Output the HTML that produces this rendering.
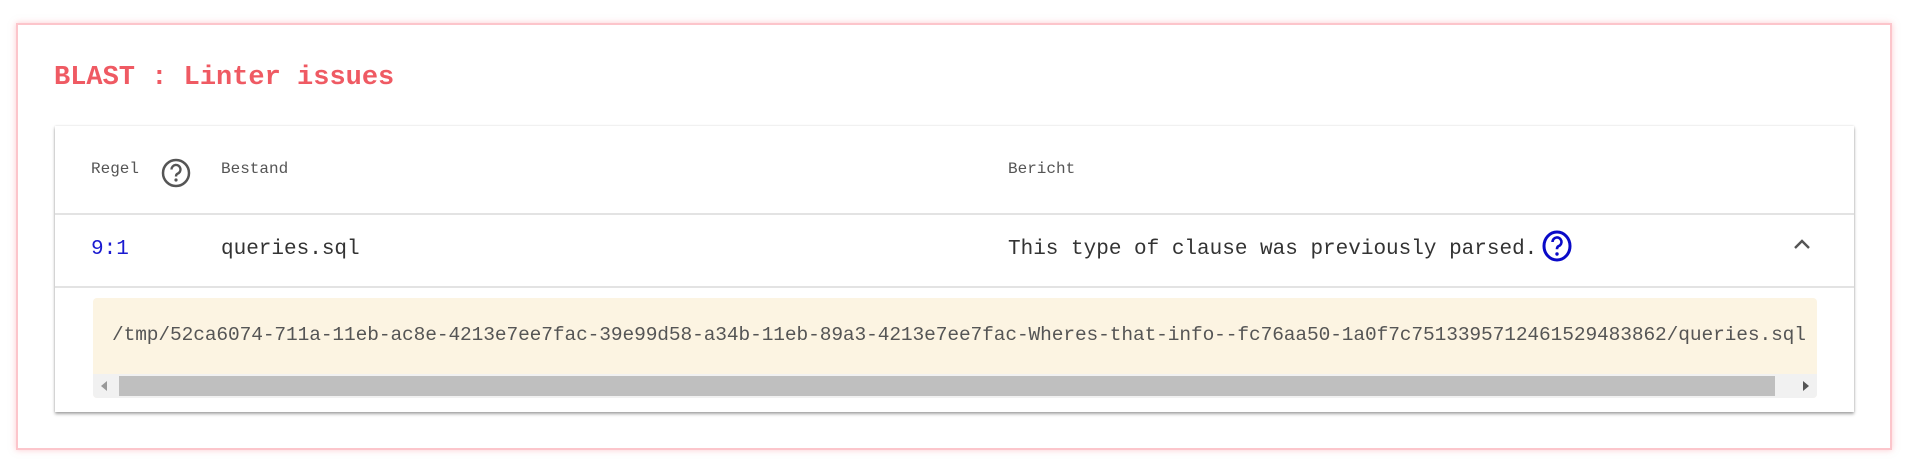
<!DOCTYPE html>
<html><head><style>
body{margin:0;width:1905px;height:472px;background:#fff;position:relative;overflow:hidden;font-family:"Liberation Mono",monospace;}
.card{position:absolute;left:16px;top:23px;width:1876px;height:427px;box-sizing:border-box;border:2px solid #fcc5cb;box-shadow:0 0 6px rgba(250,150,160,.5);background:#fff}
.title{position:absolute;left:54px;top:63px;font-size:27px;font-weight:bold;color:#ef5a63;}
.tbl{position:absolute;left:55px;top:126px;width:1799px;height:286px;background:#fff;box-shadow:0 2px 3px rgba(0,0,0,.35),0 0 2px rgba(0,0,0,.12)}
.hl{position:absolute;left:0;right:0;height:2px;background:#e3e3e3}
.h{position:absolute;top:34px;font-size:16px;color:#555}
.r{position:absolute;top:112px;font-size:21px;color:#333}
.path{position:absolute;left:38px;top:172px;width:1724px;height:100px;background:#fcf4e2;border-radius:4px;overflow:hidden}
.path span{position:absolute;left:19px;top:26px;font-size:19.5px;color:#555;white-space:nowrap;letter-spacing:-.1px}
.sb{position:absolute;left:0;right:0;bottom:0;height:24px;background:#f1f1f1}
.thumb{position:absolute;left:26px;right:42px;top:2px;height:20px;background:#bfbfbf}
</style></head><body>
<div class="card"></div>
<div class="title">BLAST : Linter issues</div>
<div class="tbl">
 <div class="h" style="left:36px">Regel</div>
 <svg style="position:absolute;left:106px;top:32px" width="30" height="30" viewBox="0 0 30 30"><circle cx="15" cy="15" r="13" fill="none" stroke="#555" stroke-width="2.5"/><path d="M10.5 11.5a4.5 4.5 0 1 1 6 4.2c-1.2.6-1.5 1.3-1.5 2.8" fill="none" stroke="#555" stroke-width="2.4"/><circle cx="15" cy="22" r="1.6" fill="#555"/></svg>
 <div class="h" style="left:166px">Bestand</div>
 <div class="h" style="left:953px">Bericht</div>
 <div class="hl" style="top:87px"></div>
 <div class="r" style="left:36px;color:#1a1ad0">9:1</div>
 <div class="r" style="left:166px">queries.sql</div>
 <div class="r" style="left:953px">This type of clause was previously parsed.</div>
 <svg style="position:absolute;left:1487px;top:104px" width="30" height="32" viewBox="0 0 30 32"><ellipse cx="15" cy="16" rx="13" ry="14" fill="none" stroke="#0a0ac8" stroke-width="3"/><path d="M10.5 12a4.5 4.5 0 1 1 6 4.2c-1.2.6-1.5 1.3-1.5 3" fill="none" stroke="#0a0ac8" stroke-width="2.6"/><circle cx="15" cy="24" r="1.7" fill="#0a0ac8"/></svg>
 <svg style="position:absolute;left:1738px;top:112px" width="18" height="12" viewBox="0 0 18 12"><path d="M2 10L9 3l7 7" fill="none" stroke="#555" stroke-width="2.4"/></svg>
 <div class="hl" style="top:160px"></div>
 <div class="path"><span>/tmp/52ca6074-711a-11eb-ac8e-4213e7ee7fac-39e99d58-a34b-11eb-89a3-4213e7ee7fac-Wheres-that-info--fc76aa50-1a0f7c7513395712461529483862/queries.sql</span>
  <div class="sb"><div class="thumb"></div>
   <svg style="position:absolute;left:8px;top:7px" width="6" height="10"><path d="M6 0L0 5l6 5z" fill="#999"/></svg>
   <svg style="position:absolute;right:8px;top:7px" width="6" height="10"><path d="M0 0l6 5-6 5z" fill="#555"/></svg>
  </div></div>
</div>
</body></html>
